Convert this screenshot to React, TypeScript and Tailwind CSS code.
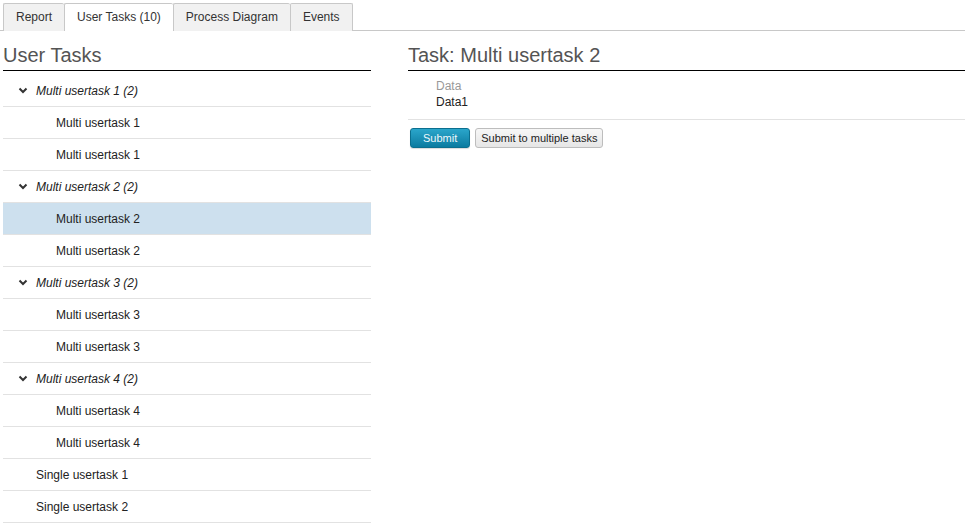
import React from "react";

const Chevron = () => (
  <svg width="10" height="7" viewBox="0 0 10 7" className="shrink-0">
    <path d="M1.5 1.5 L5 5 L8.5 1.5" fill="none" stroke="#333" strokeWidth="2" />
  </svg>
);

type Row = { kind: "group" | "child" | "single"; label: string; selected?: boolean };

const rows: Row[] = [
  { kind: "group", label: "Multi usertask 1 (2)" },
  { kind: "child", label: "Multi usertask 1" },
  { kind: "child", label: "Multi usertask 1" },
  { kind: "group", label: "Multi usertask 2 (2)" },
  { kind: "child", label: "Multi usertask 2", selected: true },
  { kind: "child", label: "Multi usertask 2" },
  { kind: "group", label: "Multi usertask 3 (2)" },
  { kind: "child", label: "Multi usertask 3" },
  { kind: "child", label: "Multi usertask 3" },
  { kind: "group", label: "Multi usertask 4 (2)" },
  { kind: "child", label: "Multi usertask 4" },
  { kind: "child", label: "Multi usertask 4" },
  { kind: "single", label: "Single usertask 1" },
  { kind: "single", label: "Single usertask 2" },
];

const tabs = [
  { label: "Report" },
  { label: "User Tasks (10)", active: true },
  { label: "Process Diagram" },
  { label: "Events", last: true },
];

export default function App() {
  return (
    <div
      className="w-[965px] h-[528px] bg-white text-[#222] overflow-hidden"
      style={{ fontFamily: '"Liberation Sans", Arial, sans-serif' }}
    >
      {/* Tabs */}
      <div className="flex pt-[3px] pl-[3px] border-b border-[#c8c8c8] h-[31px]">
        {tabs.map((t) => (
          <div
            key={t.label}
            className={
              "h-[28px] px-[12px] flex items-center text-[12px] text-[#333] border-l border-t border-[#c8c8c8] rounded-t-[2px] " +
              (t.last ? "border-r " : "") +
              (t.active ? "bg-white relative z-10" : "bg-[#f1f1f1]")
            }
          >
            <span className="-mt-[1px]">{t.label}</span>
          </div>
        ))}
      </div>

      <div className="flex pl-[3px]">
        {/* Left column */}
        <div className="w-[368px] shrink-0">
          <h2 className="mt-[13px] text-[20px] leading-[23px] text-[#545454] pb-[3px] border-b border-black">
            User Tasks
          </h2>
          <div className="mt-[4px]">
            {rows.map((r, i) => (
              <div
                key={i}
                className={
                  "h-[32px] flex items-center text-[12px] border-b border-[#e2e2e2] " +
                  (r.selected ? "bg-[#cde0ee] " : "") +
                  (r.kind === "group" ? "pl-[15px] italic" : r.kind === "child" ? "pl-[53px]" : "pl-[33px]")
                }
              >
                {r.kind === "group" && (
                  <span className="mr-[8px] flex items-center">
                    <Chevron />
                  </span>
                )}
                <span>{r.label}</span>
              </div>
            ))}
          </div>
        </div>

        {/* Right column */}
        <div className="ml-[37px] flex-1">
          <h2 className="mt-[13px] text-[20px] leading-[23px] text-[#545454] pb-[3px] border-b border-black">
            Task: Multi usertask 2
          </h2>
          <div className="pl-[28px] pt-[8px] pb-[10px] border-b border-[#e2e2e2] text-[12px] leading-[14px]">
            <div className="text-[#999]">Data</div>
            <div className="mt-[2px] text-[#222]">Data1</div>
          </div>
          <div className="mt-[8px] pl-[2px] flex gap-[5px]">
            <button className="h-[20px] px-[12px] text-[11px] text-[#eef8fc] rounded-[3px] border border-[#0b6f8f] bg-gradient-to-b from-[#2aa6cb] to-[#0a7ba0] shadow-[0_1px_1px_rgba(0,0,0,0.15)]">
              Submit
            </button>
            <button className="h-[20px] px-[5px] text-[11px] text-[#222] rounded-[3px] border border-[#bdbdbd] bg-gradient-to-b from-[#f7f7f7] to-[#e6e6e6]">
              Submit to multiple tasks
            </button>
          </div>
        </div>
      </div>
    </div>
  );
}
